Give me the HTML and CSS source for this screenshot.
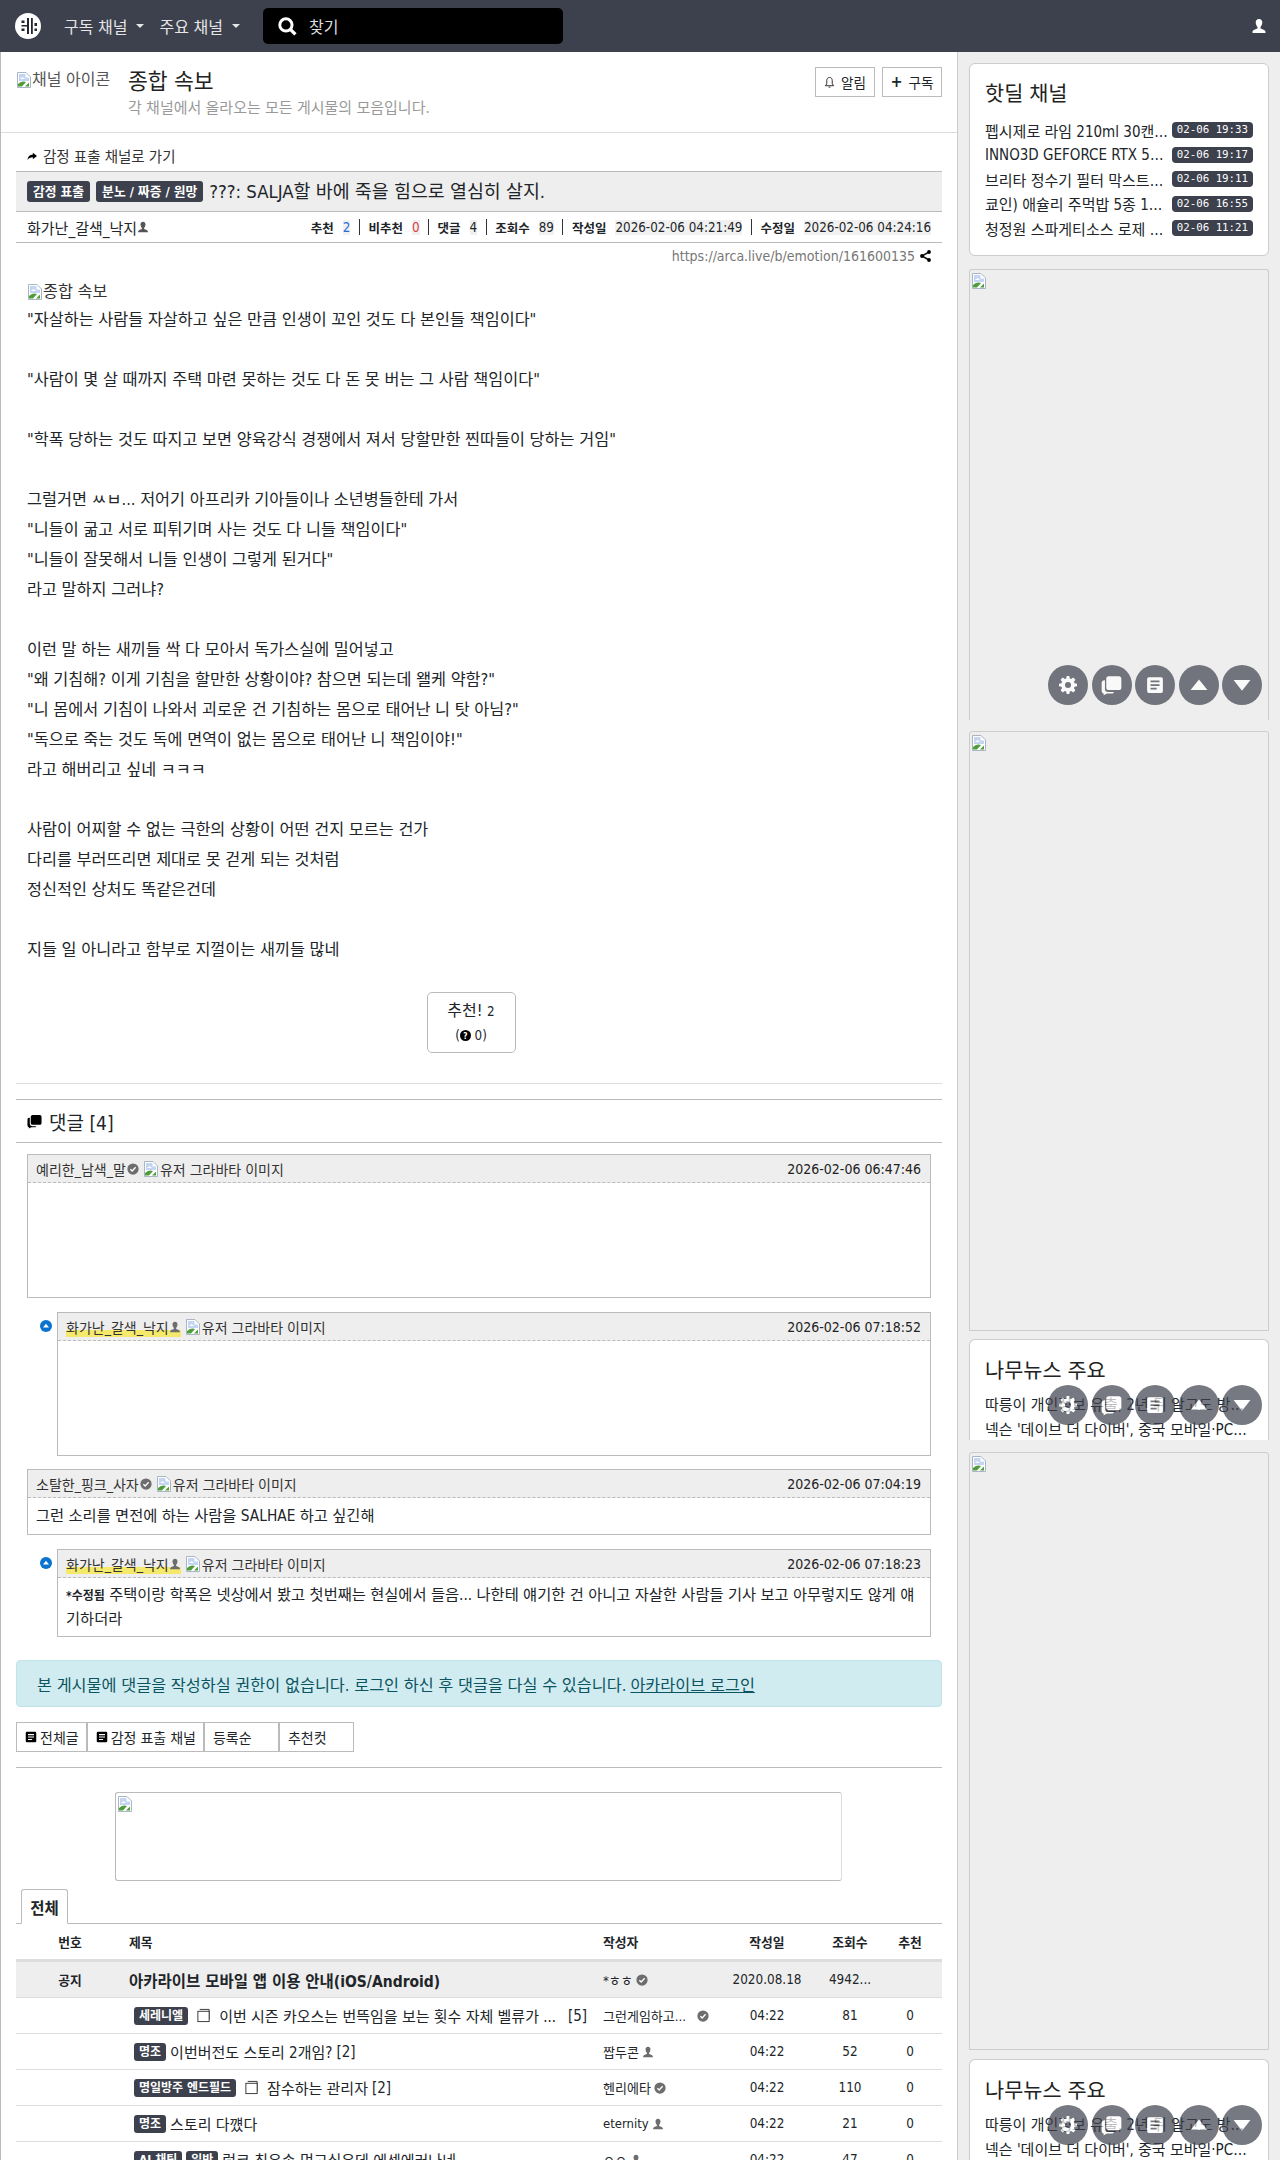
FILE: index.html
```html
<!DOCTYPE html>
<html lang="ko">
<head>
    <meta charset="UTF-8">
    <title>종합 속보</title>
    <link rel="stylesheet" href="styles.css">
</head>
<body>
<svg class="defs" width="0" height="0">
    <symbol id="i-broken" viewBox="0 0 16 16">
        <path d="M1.5.5H10L14.500 5v10.500H1.500z" fill="#fff" stroke="#a9b4c4"/>
        <path d="M3 2h6.500v3.500H13V9H3z" fill="#c3d5f2"/>
        <path d="M4 7l2.500-2L9 7z" fill="#fff"/>
        <path d="M2 14.500V12c3-3 6-3 8-2l-4 4.500z" fill="#4f9d3a"/>
        <path d="M9 14.500l4-4v4z" fill="#4f9d3a"/>
    </symbol>
    <symbol id="i-user" viewBox="0 0 16 16">
        <path d="M8 1c2 0 3.300 1.400 3.300 3.500S10 8.500 9.500 9v1.500c2.500 1 5 1.500 5 3.500v1h-13v-1c0-2 2.500-2.500 5-3.500V9C6 8.500 4.700 6.600 4.700 4.500S6 1 8 1z"/>
    </symbol>
    <symbol id="i-check" viewBox="0 0 16 16">
        <circle cx="8" cy="8" r="7.500"/>
        <path d="M4.500 8.300l2.400 2.400 4.600-5" fill="none" stroke="#fff" stroke-width="1.800"/>
    </symbol>
    <symbol id="i-comments" viewBox="0 0 16 16">
        <path d="M6 1h7.500A2 2 0 0 1 15.500 3v6.500a2 2 0 0 1-2 2H6a2 2 0 0 1-2-2V3a2 2 0 0 1 2-2z"/>
        <path d="M3 4v6.500A2.500 2.500 0 0 0 5.500 13H10l-1 1H4.500L2 15.500V14A1.800 1.800 0 0 1 .5 12V6A2 2 0 0 1 3 4z"/>
    </symbol>
    <symbol id="i-list" viewBox="0 0 16 16">
        <path fill-rule="evenodd" d="M2.500 1h11A1.500 1.500 0 0 1 15 2.500v11a1.500 1.500 0 0 1-1.500 1.500h-11A1.500 1.500 0 0 1 1 13.500v-11A1.500 1.500 0 0 1 2.500 1zM4 4v1.500h8V4zm0 3.300v1.500h8V7.300zm0 3.200V12h5.500v-1.500z"/>
    </symbol>
    <symbol id="i-gear" viewBox="0 0 16 16">
        <path fill-rule="evenodd" d="M6.800 0h2.400l.4 2.200 1.200.5L12.700 1.400l1.900 1.900-1.300 1.900.5 1.200 2.200.4v2.400l-2.200.4-.5 1.200 1.300 1.900-1.900 1.900-1.900-1.300-1.200.5-.4 2.200H6.800l-.4-2.200-1.200-.5-1.900 1.300-1.900-1.900 1.300-1.900-.5-1.200L0 9.200V6.800l2.200-.4.5-1.200-1.300-1.900 1.900-1.900 1.900 1.300 1.200-.5zM8 5.300a2.700 2.700 0 1 0 0 5.400 2.700 2.700 0 0 0 0-5.400z"/>
    </symbol>
    <symbol id="i-up" viewBox="0 0 16 16"><path d="M8 3l7.500 9.500H.5z"/></symbol>
    <symbol id="i-down" viewBox="0 0 16 16"><path d="M8 13L.5 3.500h15z"/></symbol>
    <symbol id="i-copy" viewBox="0 0 16 16">
        <path d="M4 1.500h10V12" fill="none" stroke="currentColor"/>
        <rect x="2" y="3.500" width="12" height="11" fill="#fff" stroke="currentColor"/>
    </symbol>
</svg>

<div class="page">
    <nav class="topbar">
        <svg class="logo" viewBox="0 0 26 26">
            <circle cx="13" cy="13" r="13" fill="#fff"/>
            <path d="M12 5h2v16h-2zM16 5h1.800v16H16zM6.500 7.500h3V10h-3zM6.500 12h5.500v1.500H6.500zM6.500 15.500h3V18h-3zM19.500 10H22v3h-2.500zM19.500 15.500H22V18h-2.500z" fill="#23262e"/>
        </svg>
        <a class="nav-link">구독 채널 <i class="caret"></i></a>
        <a class="nav-link">주요 채널 <i class="caret"></i></a>
        <div class="search">
            <svg class="search-icon" viewBox="0 0 18 18"><circle cx="7.500" cy="7.500" r="5.800" fill="none" stroke="#fff" stroke-width="2.800"/><path d="M11.500 11.500l5 5" stroke="#fff" stroke-width="3.200"/></svg>
            <span>찾기</span>
        </div>
        <svg class="nav-user"><use href="#i-user"/></svg>
    </nav>

    <div class="layout">
        <main class="content">
            <header class="board-head">
                <div class="board-icon"><svg class="broken"><use href="#i-broken"/></svg><span>채널 아이콘</span></div>
                <div class="board-info">
                    <div class="board-title">종합 속보</div>
                    <div class="board-desc">각 채널에서 올라오는 모든 게시물의 모음입니다.</div>
                </div>
                <div class="board-btns">
                    <a class="head-btn"><svg class="bell" viewBox="0 0 12 14"><path d="M6 1.500c2 0 3 1.500 3 3.500v3.500l1.500 2h-9L3 8.500V5c0-2 1-3.500 3-3.500zM5 12h2" fill="none" stroke="#222"/></svg>알림</a>
                    <a class="head-btn"><b class="plus">+</b>구독</a>
                </div>
            </header>

            <section class="article">
                <div class="goto"><svg class="goto-icon" viewBox="0 0 12 12"><path d="M7 2l5 4-5 4V7.600C4 7.600 2 8.500.5 11 1 7 3 4.500 7 4.300z"/></svg>감정 표출 채널로 가기</div>
                <div class="title-bar">
                    <span class="badge">감정 표출</span>
                    <span class="badge">분노 / 짜증 / 원망</span>
                    <span class="title-text">???: SALJA할 바에 죽을 힘으로 열심히 살지.</span>
                </div>
                <div class="meta-row">
                    <span class="author">화가난_갈색_낙지<svg class="mini"><use href="#i-user"/></svg></span>
                    <div class="stats">
                        <b>추천</b><span class="val blue">2</span><i class="sep"></i>
                        <b>비추천</b><span class="val red">0</span><i class="sep"></i>
                        <b>댓글</b><span class="val">4</span><i class="sep"></i>
                        <b>조회수</b><span class="val">89</span><i class="sep"></i>
                        <b>작성일</b><span class="val">2026-02-06 04:21:49</span><i class="sep"></i>
                        <b>수정일</b><span class="val">2026-02-06 04:24:16</span>
                    </div>
                </div>
                <div class="url-row">https://arca.live/b/emotion/161600135<svg class="share" viewBox="0 0 12 12"><path d="M10 2L3 6l7 4" fill="none" stroke="#111" stroke-width="1.500"/><circle cx="10" cy="2" r="1.900"/><circle cx="3" cy="6" r="1.900"/><circle cx="10" cy="10" r="1.900"/></svg></div>

                <div class="body-text">
                    <div class="body-img"><svg class="broken"><use href="#i-broken"/></svg>종합 속보</div>
                    <p>"자살하는 사람들 자살하고 싶은 만큼 인생이 꼬인 것도 다 본인들 책임이다"</p>
                    <p>&nbsp;</p>
                    <p>"사람이 몇 살 때까지 주택 마련 못하는 것도 다 돈 못 버는 그 사람 책임이다"</p>
                    <p>&nbsp;</p>
                    <p>"학폭 당하는 것도 따지고 보면 양육강식 경쟁에서 져서 당할만한 찐따들이 당하는 거임"</p>
                    <p>&nbsp;</p>
                    <p>그럴거면 ㅆㅂ... 저어기 아프리카 기아들이나 소년병들한테 가서</p>
                    <p>"니들이 굶고 서로 피튀기며 사는 것도 다 니들 책임이다"</p>
                    <p>"니들이 잘못해서 니들 인생이 그렇게 된거다"</p>
                    <p>라고 말하지 그러냐?</p>
                    <p>&nbsp;</p>
                    <p>이런 말 하는 새끼들 싹 다 모아서 독가스실에 밀어넣고</p>
                    <p>"왜 기침해? 이게 기침을 할만한 상황이야? 참으면 되는데 왤케 약함?"</p>
                    <p>"니 몸에서 기침이 나와서 괴로운 건 기침하는 몸으로 태어난 니 탓 아님?"</p>
                    <p>"독으로 죽는 것도 독에 면역이 없는 몸으로 태어난 니 책임이야!"</p>
                    <p>라고 해버리고 싶네 ㅋㅋㅋ</p>
                    <p>&nbsp;</p>
                    <p>사람이 어찌할 수 없는 극한의 상황이 어떤 건지 모르는 건가</p>
                    <p>다리를 부러뜨리면 제대로 못 걷게 되는 것처럼</p>
                    <p>정신적인 상처도 똑같은건데</p>
                    <p>&nbsp;</p>
                    <p>지들 일 아니라고 함부로 지껄이는 새끼들 많네</p>
                </div>

                <div class="vote-wrap">
                    <div class="vote">
                        <div>추천! <small>2</small></div>
                        <div class="vote-sub">(<svg class="q" viewBox="0 0 12 12"><circle cx="6" cy="6" r="6"/><text x="6" y="9.500" text-anchor="middle" font-size="9" font-weight="700" fill="#fff">?</text></svg> 0)</div>
                    </div>
                </div>
            </section>

            <section class="comments">
                <div class="comments-head"><svg class="head-icon"><use href="#i-comments"/></svg>댓글 [4]</div>

                <div class="comment c-empty">
                    <div class="c-head"><span>예리한_남색_말</span><svg class="mini gray"><use href="#i-check"/></svg> <svg class="broken"><use href="#i-broken"/></svg><span>유저 그라바타 이미지</span><time>2026-02-06 06:47:46</time></div>
                </div>
                <div class="reply">
                    <svg class="reply-mark" viewBox="0 0 12 12"><circle cx="6" cy="6" r="6" fill="#0a72cf"/><path d="M6 3.800L9 7.500H3z" fill="#fff"/></svg>
                    <div class="comment c-empty">
                        <div class="c-head"><span class="hl">화가난_갈색_낙지<svg class="mini gray"><use href="#i-user"/></svg></span> <svg class="broken"><use href="#i-broken"/></svg><span>유저 그라바타 이미지</span><time>2026-02-06 07:18:52</time></div>
                    </div>
                </div>
                <div class="comment">
                    <div class="c-head"><span>소탈한_핑크_사자</span><svg class="mini gray"><use href="#i-check"/></svg> <svg class="broken"><use href="#i-broken"/></svg><span>유저 그라바타 이미지</span><time>2026-02-06 07:04:19</time></div>
                    <div class="c-body">그런 소리를 면전에 하는 사람을 SALHAE 하고 싶긴해</div>
                </div>
                <div class="reply">
                    <svg class="reply-mark" viewBox="0 0 12 12"><circle cx="6" cy="6" r="6" fill="#0a72cf"/><path d="M6 3.800L9 7.500H3z" fill="#fff"/></svg>
                    <div class="comment">
                        <div class="c-head"><span class="hl">화가난_갈색_낙지<svg class="mini gray"><use href="#i-user"/></svg></span> <svg class="broken"><use href="#i-broken"/></svg><span>유저 그라바타 이미지</span><time>2026-02-06 07:18:23</time></div>
                        <div class="c-body tall"><b class="edited">*수정됨</b> 주택이랑 학폭은 넷상에서 봤고 첫번째는 현실에서 들음... 나한테 얘기한 건 아니고 자살한 사람들 기사 보고 아무렇지도 않게 얘기하더라</div>
                    </div>
                </div>
                <div class="alert">본 게시물에 댓글을 작성하실 권한이 없습니다. 로그인 하신 후 댓글을 다실 수 있습니다. <u>아카라이브 로그인</u></div>
            </section>

            <section class="board">
                <div class="btn-row">
                    <a class="bbtn"><svg class="bbtn-icon"><use href="#i-list"/></svg>전체글</a>
                    <a class="bbtn"><svg class="bbtn-icon"><use href="#i-list"/></svg>감정 표출 채널</a>
                    <a class="bbtn wide">등록순</a>
                    <a class="bbtn wide">추천컷</a>
                </div>
                <div class="ad-box"><svg class="broken"><use href="#i-broken"/></svg></div>
                <div class="tabs"><span class="tab">전체</span></div>

                <div class="row row-head">
                    <span class="col-num">번호</span><span class="col-title">제목</span><span class="col-author">작성자</span><span class="col-c">작성일</span><span class="col-c">조회수</span><span class="col-c">추천</span>
                </div>
                <div class="row row-notice">
                    <span class="col-num">공지</span><span class="col-title">아카라이브 모바일 앱 이용 안내(iOS/Android)</span><span class="col-author">*ㅎㅎ <svg class="mini gray"><use href="#i-check"/></svg></span><span class="col-c">2020.08.18</span><span class="col-c">4942...</span><span class="col-c"></span>
                </div>
                <div class="row">
                    <span class="col-num"></span>
                    <span class="col-title pad"><em class="tag">세레니엘</em><svg class="copy"><use href="#i-copy"/></svg><span class="clip">이번 시즌 카오스는 번뜩임을 보는 횟수 자체 벨류가 ...</span><span class="cnt">[5]</span></span>
                    <span class="col-author"><span class="clip-a">그런게임하고...</span><svg class="mini gray"><use href="#i-check"/></svg></span><span class="col-c">04:22</span><span class="col-c">81</span><span class="col-c">0</span>
                </div>
                <div class="row">
                    <span class="col-num"></span>
                    <span class="col-title pad"><em class="tag">명조</em>이번버전도 스토리 2개임?<span class="cnt-s">[2]</span></span>
                    <span class="col-author">짭두콘 <svg class="mini gray"><use href="#i-user"/></svg></span><span class="col-c">04:22</span><span class="col-c">52</span><span class="col-c">0</span>
                </div>
                <div class="row">
                    <span class="col-num"></span>
                    <span class="col-title pad"><em class="tag">명일방주 엔드필드</em><svg class="copy"><use href="#i-copy"/></svg>잠수하는 관리자<span class="cnt-s">[2]</span></span>
                    <span class="col-author">헨리에타 <svg class="mini gray"><use href="#i-check"/></svg></span><span class="col-c">04:22</span><span class="col-c">110</span><span class="col-c">0</span>
                </div>
                <div class="row">
                    <span class="col-num"></span>
                    <span class="col-title pad"><em class="tag">명조</em>스토리 다꺴다</span>
                    <span class="col-author">eternity <svg class="mini gray"><use href="#i-user"/></svg></span><span class="col-c">04:22</span><span class="col-c">21</span><span class="col-c">0</span>
                </div>
                <div class="row">
                    <span class="col-num"></span>
                    <span class="col-title pad"><em class="tag">AI 채팅</em><em class="tag">일반</em>럭코 최유속 먹고싶은데 에셋에러나네</span>
                    <span class="col-author">ㅇㅇ <svg class="mini gray"><use href="#i-user"/></svg></span><span class="col-c">04:22</span><span class="col-c">47</span><span class="col-c">0</span>
                </div>
            </section>
        </main>

        <aside class="side">
            <div class="card hotdeal">
                <h5>핫딜 채널</h5>
                <div class="deal"><span>펩시제로 라임 210ml 30캔 (10,900원)</span><time>02-06 19:33</time></div>
                <div class="deal"><span>INNO3D GEFORCE RTX 5070 TWIN X2</span><time>02-06 19:17</time></div>
                <div class="deal"><span>브리타 정수기 필터 막스트라 프로</span><time>02-06 19:11</time></div>
                <div class="deal"><span>쿄인) 애슐리 주먹밥 5종 10개 세트</span><time>02-06 16:55</time></div>
                <div class="deal"><span>청정원 스파게티소스 로제 600g 3개</span><time>02-06 11:21</time></div>
            </div>
            <div class="ad a1"><svg class="broken"><use href="#i-broken"/></svg></div>
            <div class="ad a2"><svg class="broken"><use href="#i-broken"/></svg></div>
            <div class="card news">
                <h5>나무뉴스 주요</h5>
                <div class="news-line">따릉이 개인정보 유출, 2년 뒤 알고도 방치했다</div>
                <div class="news-line">넥슨 '데이브 더 다이버', 중국 모바일·PC버전 출시 확정</div>
            </div>
            <div class="ad a3"><svg class="broken"><use href="#i-broken"/></svg></div>
            <div class="card news last">
                <h5>나무뉴스 주요</h5>
                <div class="news-line">따릉이 개인정보 유출, 2년 뒤 알고도 방치했다</div>
                <div class="news-line">넥슨 '데이브 더 다이버', 중국 모바일·PC버전 출시 확정</div>
            </div>
        </aside>
    </div>

    <div class="float-btns f1">
        <a><svg class="fi"><use href="#i-gear"/></svg></a><a><svg class="fi big"><use href="#i-comments"/></svg></a><a><svg class="fi"><use href="#i-list"/></svg></a><a><svg class="fi"><use href="#i-up"/></svg></a><a><svg class="fi"><use href="#i-down"/></svg></a>
    </div>
    <div class="float-btns f2">
        <a><svg class="fi"><use href="#i-gear"/></svg></a><a><svg class="fi big"><use href="#i-comments"/></svg></a><a><svg class="fi"><use href="#i-list"/></svg></a><a><svg class="fi"><use href="#i-up"/></svg></a><a><svg class="fi"><use href="#i-down"/></svg></a>
    </div>
    <div class="float-btns f3">
        <a><svg class="fi"><use href="#i-gear"/></svg></a><a><svg class="fi big"><use href="#i-comments"/></svg></a><a><svg class="fi"><use href="#i-list"/></svg></a><a><svg class="fi"><use href="#i-up"/></svg></a><a><svg class="fi"><use href="#i-down"/></svg></a>
    </div>
</div>
</body>
</html>
```

FILE: styles.css
```css
html, body {
    margin: 0;
    padding: 0;
    background: #fff;
}
body {
    font-family: "DejaVu Sans", "Noto Sans CJK KR", sans-serif;
    font-stretch: condensed;
    font-size: 16px;
    color: #212529;
}
.defs {
    position: absolute;
}
.page {
    position: relative;
    height: 2160px;
    overflow: hidden;
}

/* top bar */
.topbar {
    height: 52px;
    background: #3d414d;
    display: flex;
    align-items: center;
    padding-left: 15px;
    color: #fff;
}
.logo {
    width: 26px;
    height: 26px;
    margin-right: 23px;
}
.nav-link {
    color: #e6e6e6;
    font-size: 16px;
    margin-right: 15px;
    display: flex;
    align-items: center;
}
.caret {
    width: 0;
    height: 0;
    margin-left: 9px;
    border-top: 4px solid #e6e6e6;
    border-left: 4px solid transparent;
    border-right: 4px solid transparent;
}
.search {
    width: 300px;
    height: 36px;
    margin-left: 8px;
    background: #000;
    border-radius: 5px;
    display: flex;
    align-items: center;
    color: #ddd;
    font-size: 16px;
}
.search-icon {
    width: 19px;
    height: 19px;
    margin: 0 12px 0 15px;
}
.nav-user {
    width: 16px;
    height: 16px;
    margin-left: auto;
    margin-right: 13px;
    fill: #fff;
}

.layout {
    display: flex;
    align-items: stretch;
}
.content {
    width: 958px;
    box-sizing: border-box;
    border-left: 1px solid #bbb;
    border-right: 1px solid #ccc;
    background: #fff;
    flex: none;
}
.side {
    width: 322px;
    box-sizing: border-box;
    flex: none;
    background: #eee;
    padding: 11px 11px 0 11px;
    height: 2108px;
    overflow: hidden;
}

.broken {
    width: 16px;
    height: 16px;
    vertical-align: -3px;
    flex: none;
}

/* board head */
.board-head {
    height: 80px;
    border-bottom: 1px solid #ddd;
    display: flex;
    padding: 0 15px;
}
.board-icon {
    width: 96px;
    margin-top: 14px;
    height: 26px;
    overflow: hidden;
    white-space: nowrap;
    color: #555;
    font-size: 16px;
    flex: none;
}
.board-info {
    margin-left: 16px;
    padding-top: 16px;
}
.board-title {
    font-size: 21.600px;
    line-height: 28px;
    color: #222;
}
.board-desc {
    font-size: 15px;
    color: #999;
}
.board-btns {
    margin-left: auto;
    padding-top: 15px;
    display: flex;
    gap: 7px;
}
.head-btn {
    height: 30px;
    width: 60px;
    box-sizing: border-box;
    justify-content: center;
    border: 1px solid #bbb;
    font-size: 13.600px;
    display: flex;
    align-items: center;
    gap: 6px;
}
.bell {
    width: 11px;
    height: 13px;
}
.plus {
    font-size: 16px;
    line-height: 1;
}

/* article */
.article {
    padding: 0 15px;
}
.goto {
    height: 38px;
    box-sizing: border-box;
    padding: 7px 0 0 11px;
    display: flex;
    align-items: center;
    font-size: 14.500px;
    color: #333;
    gap: 6px;
}
.goto-icon {
    width: 10px;
    height: 10px;
}
.title-bar {
    height: 41px;
    box-sizing: border-box;
    background: #eee;
    border-top: 1px solid #bbb;
    border-bottom: 1px solid #bbb;
    display: flex;
    align-items: center;
    padding-left: 11px;
    gap: 6px;
}
.badge {
    background: #3d414d;
    color: #fff;
    font-size: 12.800px;
    font-weight: 700;
    line-height: 21px;
    padding: 0 6px;
    border-radius: 3px;
    white-space: nowrap;
}
.title-text {
    font-size: 18.400px;
    color: #212529;
    margin-bottom: 3px;
}
.meta-row {
    height: 31px;
    box-sizing: border-box;
    border-bottom: 1px solid #bbb;
    display: flex;
    align-items: center;
    justify-content: space-between;
    padding: 0 11px;
}
.author {
    font-size: 15px;
    display: flex;
    align-items: center;
}
.mini {
    width: 12px;
    height: 12px;
    fill: #555;
    vertical-align: -1px;
}
.gray {
    fill: #6d6d6d;
}
.stats {
    display: flex;
    align-items: center;
    font-size: 13.300px;
}
.stats b {
    font-size: 12.500px;
    margin-right: 9px;
}
.val {
    background: #f1f1f1;
}
.blue {
    color: #2d6bd6;
}
.red {
    color: #d43b3b;
}
.sep {
    width: 1px;
    height: 16px;
    background: #333;
    margin: 0 8.500px;
}
.url-row {
    height: 25px;
    display: flex;
    align-items: center;
    justify-content: flex-end;
    padding-right: 11px;
    color: #777;
    font-size: 14px;
    gap: 4px;
}
.share {
    width: 12px;
    height: 12px;
}
.body-text {
    padding: 12px 11px 0;
    line-height: 30px;
    font-size: 16.300px;
    color: #212529;
}
.body-text p {
    margin: 0;
}
.body-img {
    line-height: 24px;
    color: #333;
    height: 24px;
    margin-bottom: 1px;
}
.vote-wrap {
    display: flex;
    justify-content: center;
    margin-top: 27px;
    padding: 0 16px 30px 0;
    border-bottom: 1px solid #ddd;
}
.vote {
    width: 89px;
    height: 61px;
    border: 1px solid #bbb;
    border-radius: 5px;
    text-align: center;
    font-size: 16px;
    padding-top: 6px;
    box-sizing: border-box;
    line-height: 24px;
}
.vote small {
    font-size: 13.300px;
}
.vote-sub {
    font-size: 13.300px;
}
.q {
    width: 11px;
    height: 11px;
    vertical-align: -1px;
}

/* comments */
.comments {
    padding: 0 15px;
    margin-top: 15px;
}
.comments-head {
    height: 44px;
    box-sizing: border-box;
    border-top: 1px solid #bbb;
    border-bottom: 1px solid #bbb;
    display: flex;
    align-items: center;
    padding-left: 11px;
    font-size: 19px;
    gap: 7px;
}
.head-icon {
    width: 15px;
    height: 15px;
}
.comment {
    border: 1px solid #bbb;
    margin: 11px 11px 0;
}
.reply + .comment {
    margin-top: 13px;
}
.c-empty {
    height: 144px;
    box-sizing: border-box;
}
.c-head {
    height: 27px;
    background: #eee;
    border-bottom: 1px dashed #bbb;
    padding: 0 9px 0 8px;
    display: flex;
    align-items: center;
    font-size: 14px;
    color: #333;
    gap: 1px;
}
.c-head .broken {
    margin-left: 3px;
}
.c-head time {
    margin-left: auto;
    color: #222;
}
.hl {
    background: linear-gradient(transparent 65%, #f4e96a 65%);
    display: flex;
    align-items: center;
}
.c-body {
    padding: 9px 8px;
    font-size: 15.300px;
    line-height: 18px;
}
.c-body.tall {
    line-height: 23px;
    padding: 6px 8px 5px;
}
.edited {
    font-size: 12px;
}
.reply {
    position: relative;
    margin: 14px 0 0 41px;
}
.reply .comment {
    margin: 0 11px 0 0;
}
.reply-mark {
    position: absolute;
    left: -17px;
    top: 8px;
    width: 12px;
    height: 12px;
}
.alert {
    margin-top: 23px;
    height: 47px;
    background: #d1ecf1;
    border: 1px solid #bee5eb;
    border-radius: 4px;
    box-sizing: border-box;
    display: flex;
    align-items: center;
    padding-left: 20px;
    color: #0c5460;
    font-size: 16.300px;
    gap: 4px;
}

/* board list */
.board {
    padding: 0 15px;
}
.btn-row {
    display: flex;
    margin-top: 15px;
    padding-bottom: 15px;
    border-bottom: 1px solid #bbb;
}
.bbtn {
    height: 30px;
    box-sizing: border-box;
    border: 1px solid #bbb;
    padding: 0 7px 0 8px;
    display: flex;
    align-items: center;
    font-size: 14px;
    gap: 3px;
}
.bbtn.wide {
    width: 75px;
}
.bbtn-icon {
    width: 12px;
    height: 12px;
}
.ad-box {
    width: 727px;
    height: 89px;
    margin: 24px 0 0 99px;
    box-sizing: border-box;
    border: 1px solid #bbb;
    border-radius: 3px;
    border-right-color: #ddd;
    padding: 1px;
}
.tabs {
    height: 34px;
    margin-top: 8px;
    border-bottom: 1px solid #bbb;
    padding-left: 5px;
}
.tab {
    display: inline-flex;
    align-items: center;
    justify-content: center;
    height: 35px;
    width: 47px;
    box-sizing: border-box;
    border: 1px solid #bbb;
    border-bottom-color: #fff;
    border-radius: 3px 3px 0 0;
    font-weight: 700;
    font-size: 15.500px;
    background: #fff;
}
.row {
    display: grid;
    grid-template-columns: 108px 479px 119px 90px 76px 44px;
    align-items: center;
    height: 36px;
    box-sizing: border-box;
    border-bottom: 1px solid #ddd;
    font-size: 15px;
    white-space: nowrap;
}
.row-head {
    height: 38px;
    border-bottom: 3px solid #ddd;
    font-size: 12.800px;
    font-weight: 700;
}
.row-head .col-c, .row-head .col-author {
    font-size: 12.800px;
}
.row-notice {
    background: #eee;
}
.row-notice .col-num {
    font-weight: 700;
    font-size: 12.800px;
}
.row-notice .col-title {
    font-weight: 700;
    font-size: 15.500px;
}
.col-num {
    text-align: center;
}
.col-title {
    display: flex;
    align-items: center;
    gap: 4px;
    padding-left: 5px;
    overflow: hidden;
}
.col-title.pad {
    padding-left: 10px;
}
.col-author {
    font-size: 13px;
    display: flex;
    align-items: center;
    gap: 3px;
}
.col-c {
    text-align: center;
    font-size: 13.400px;
}
.tag {
    font-style: normal;
    background: #3d414d;
    color: #fff;
    font-size: 12px;
    font-weight: 700;
    line-height: 18px;
    padding: 0 5px;
    border-radius: 3px;
}
.copy {
    width: 15px;
    height: 15px;
    color: #333;
    margin: 0 4px;
}
.cnt {
    margin-left: auto;
    margin-right: 16px;
}
.clip-a {
    width: 83px;
    margin-right: 8px;
    overflow: hidden;
}

/* sidebar */
.card {
    background: #fff;
    border: 1px solid #ccc;
    border-radius: 6px;
    box-sizing: border-box;
    padding: 0 15px;
}
.card h5 {
    margin: 0;
    font-size: 20.800px;
    font-weight: 400;
    line-height: 26px;
    color: #222;
}
.hotdeal {
    height: 193px;
    padding-top: 17px;
}
.hotdeal h5 {
    margin-bottom: 11px;
}
.deal {
    display: flex;
    align-items: center;
    height: 24.500px;
    font-size: 15px;
    gap: 3px;
}
.deal span {
    flex: 1;
    min-width: 0;
    white-space: nowrap;
    overflow: hidden;
    text-overflow: ellipsis;
}
.deal time {
    background: #3d414d;
    color: #fff;
    border-radius: 4px;
    font-family: "DejaVu Sans Mono", monospace;
    font-size: 10.750px;
    line-height: 16px;
    padding: 0 5px;
    flex: none;
}
.ad {
    border: 1px solid #ccc;
    border-bottom: 0;
    border-radius: 3px 3px 0 0;
    box-sizing: border-box;
    padding: 1px;
}
.a1 {
    height: 451px;
    margin-top: 13px;
}
.a2 {
    height: 600px;
    margin-top: 11px;
    border-bottom: 1px solid #ccc;
}
.a3 {
    height: 598px;
    margin-top: 12px;
    border-bottom: 1px solid #ccc;
}
.news {
    height: 101px;
    margin-top: 8px;
    padding-top: 18px;
    border-bottom: 0;
    border-radius: 6px 6px 0 0;
    overflow: hidden;
}
.news.last {
    margin-top: 9px;
}
.news h5 {
    margin-bottom: 9px;
}
.news-line {
    font-size: 15px;
    line-height: 25px;
    white-space: nowrap;
    overflow: hidden;
    text-overflow: ellipsis;
}

/* floating buttons repeat over the sidebar */
.float-btns {
    position: absolute;
    left: 1048px;
    display: flex;
    gap: 3.500px;
    opacity: .7;
}
.float-btns a {
    width: 40px;
    height: 40px;
    border-radius: 50%;
    background: #3d414d;
    display: flex;
    align-items: center;
    justify-content: center;
}
.fi {
    width: 18px;
    height: 18px;
    fill: #fff;
}
.fi.big {
    width: 21px;
    height: 21px;
}
.f1 {
    top: 665px;
}
.f2 {
    top: 1385px;
}
.f3 {
    top: 2105px;
}
```
